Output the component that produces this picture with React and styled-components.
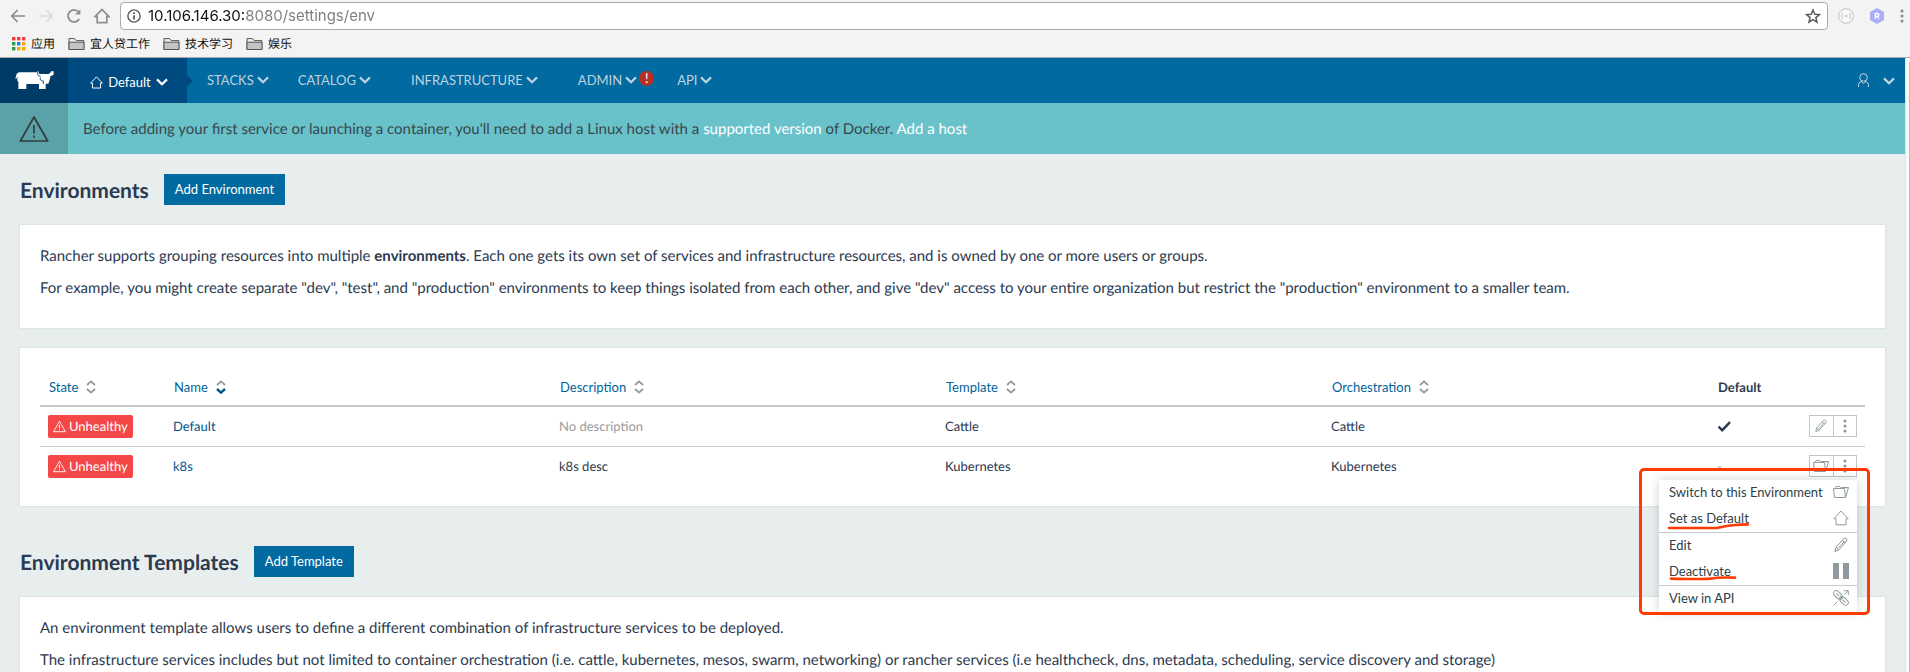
import React from "react";
import styled, { createGlobalStyle, css } from "styled-components";

const GlobalStyle = createGlobalStyle`
  *, *::before, *::after { box-sizing: border-box; }
  html, body, #root { height: 100%; }
  body {
    margin: 0;
    overflow: hidden;
    font-family: Lato, "Noto Sans CJK SC", sans-serif;
    font-size: 15px;
    line-height: 22px;
    color: #2b3a50;
    background: #e8eeee;
    text-rendering: geometricPrecision;
  }
  button { font: inherit; color: inherit; background: none; border: 0; padding: 0; margin: 0; cursor: pointer; }
  a { color: inherit; text-decoration: none; }
  svg { display: block; flex: none; }
`;

/* ---------- Icons ---------- */

const Line = ({ size = 16, w = 1, children, ...rest }) => (
  <svg width={size} height={size} viewBox="0 0 16 16" fill="none" stroke="currentColor" strokeWidth={w} aria-hidden="true" {...rest}>
    {children}
  </svg>
);

const Chevron = ({ width = 12 }) => (
  <svg width={width} height="8" viewBox="0 0 12 8" fill="none" stroke="currentColor" strokeWidth="2.2" aria-hidden="true">
    <path d="M1 1.4 6 6.2 11 1.4" />
  </svg>
);

const HomeIcon = ({ size, w }) => (
  <Line size={size} w={w}>
    <path d="M.8 8.8 8 1l7.2 7.800H13v6H3v-6H.8z" />
  </Line>
);

const FolderIcon = () => (
  <Line>
    <path d="M1.5 13.5.5 4.5h11l1 9zM2 4.500l1.200-2h3.600l1 1h6.200v1M12.500 13.500l3-10H13" />
  </Line>
);

const PencilIcon = ({ size }) => (
  <Line size={size}>
    <path d="M2 14.6 3 10.4 10.6 1.8Q12 .6 13.4 1.6 14.6 3 13.6 4.2L6 12.8zM3 10.4l3 2.4M9.3 3.4l3 2.4M5.600 11l6.200-7" />
  </Line>
);

const PauseIcon = () => (
  <Line stroke="none" fill="currentColor">
    <path d="M0 0h6v16H0zM10 0h6v16h-6z" />
  </Line>
);

const LinkIcon = () => (
  <Line w={1}>
    <path d="M.6 15.400l3.800-3.800M11.600 4.400l3.400-3.400M10.800.7h4.500v4.500" />
    <g transform="rotate(45 8 8)">
      <rect x="-1.200" y="5.300" width="9.600" height="5.400" rx="2.700" />
      <rect x="7.600" y="5.300" width="9.600" height="5.400" rx="2.700" />
      <path d="M1.600 8h3.800M10.600 8h3.800M6 7h4M6 9h4" />
    </g>
  </Line>
);

const DotsIcon = () => (
  <svg width="4" height="14" viewBox="0 0 4 14" fill="currentColor" aria-hidden="true">
    <circle cx="2" cy="2" r="1.6" />
    <circle cx="2" cy="7" r="1.6" />
    <circle cx="2" cy="12" r="1.6" />
  </svg>
);

const CheckIcon = () => (
  <svg width="14" height="22" viewBox="0 0 14 22" fill="none" stroke="currentColor" strokeWidth="2.4" aria-label="Yes">
    <path d="M1.500 11.6 5.300 15.200 13 7.200" />
  </svg>
);

const WarnIcon = ({ size, w }) => (
  <Line size={size} w={w}>
    <path d="M8 1.600 15.300 14.400H.7zM8 5.800v4.600M8 11.400v1.300" strokeLinejoin="round" />
  </Line>
);

const SortIcon = ({ active }) => (
  <svg width="10" height="14" viewBox="0 0 10 14" fill="none" stroke="#8f9a9f" strokeWidth="1.8" aria-hidden="true">
    <path d="M1 5 5 1.4 9 5" />
    <path d="M1 9 5 12.6 9 9" stroke={active ? "#00558b" : "#8f9a9f"} strokeWidth={active ? 2.4 : 1.8} />
  </svg>
);

const UserIcon = () => (
  <svg width="11" height="15" viewBox="0 0 11 15" fill="none" stroke="currentColor" aria-hidden="true">
    <circle cx="5.5" cy="4.5" r="3.8" />
    <path d="M.6 14v-2.6q.2-2 2.6-2.9M10.4 14v-2.6q-.2-2-2.6-2.9M3 8l2.5 2.6L8 8" />
  </svg>
);

const CowLogo = () => (
  <svg width="39" height="19" viewBox="0 0 117 57" fill="#fff" aria-hidden="true">
    <path d="M9 5Q10 4 14 4H68V1H71V6Q72 9 75 9H100Q107 9 108 1H116V10Q115 15 105 16L106 20 102 33 100 38H92V54H72V39H34V54H10V32L7 29V16L4 23H1L4 11Q6 7 9 5Z" />
    <path d="M68 4v7q1 5 9 5M76 20q-2 10 9 10v9" fill="none" stroke="#003b68" strokeWidth="2.6" />
  </svg>
);

/* ---------- Browser chrome ---------- */

const Screen = styled.div`
  display: flex;
  flex-direction: column;
  height: 100vh;
  overflow: hidden;
`;

const Chrome = styled.div`
  flex: none;
  background: #f3f3f3;
  border-bottom: 1px solid #a9a9a9;
  font-family: Inter, "Noto Sans CJK SC", sans-serif;
`;

const Toolbar = styled.div`
  display: flex;
  align-items: center;
  height: 30px;
  padding: 2px 6px 0 10px;
`;

const ToolGroup = styled.div`
  display: flex;
  align-items: center;
  gap: 12px;
  margin-right: 10px;
`;

const ToolButton = styled.button`
  display: grid;
  place-items: center;
  color: ${(p) => (p.disabled ? "#d9d9d9" : "#8d8d8d")};
`;

const Omnibox = styled.label`
  flex: 1;
  display: flex;
  align-items: center;
  gap: 7px;
  height: 28px;
  padding: 0 6px;
  color: #5a5a5a;
  background: #fff;
  border: 1px solid #ababab;
  border-radius: 4px;
`;

const UrlInput = styled.input`
  flex: 1;
  min-width: 0;
  padding: 0;
  border: 0;
  outline: 0;
  font: 15px/20px Inter, sans-serif;
  color: transparent;
  background: linear-gradient(to right, #111 97px, #7b7b7b 97px);
  background-clip: text;
`;

const Extensions = styled.div`
  display: flex;
  align-items: center;
  gap: 16px;
  margin-left: 10px;
  color: #777;
`;

const Bookmarks = styled.nav`
  display: flex;
  align-items: center;
  gap: 13px;
  height: 27px;
  padding: 0 12px;
`;

const Bookmark = styled.a`
  display: flex;
  align-items: center;
  gap: 5px;
  font-size: 12px;
  line-height: 18px;
  color: #111;
`;

const AppsIcon = () => (
  <svg width="14" height="14" viewBox="0 0 14 14" aria-hidden="true">
    {["#f23b3b", "#f23b3b", "#f23b3b", "#2c9a4b", "#1a80f0", "#f5a800", "#2c9a4b", "#f5a800", "#f5a800"].map((c, i) => (
      <rect key={i} x={(i % 3) * 5} y={Math.floor(i / 3) * 5} width="3.4" height="3.4" fill={c} />
    ))}
  </svg>
);

const BookmarkFolder = () => (
  <svg width="17" height="14" viewBox="0 0 17 14" fill="#c4c4c4" stroke="#555" aria-hidden="true">
    <path d="M1 12.5V1.6h5.6l1.6 2h7.6v8.9z" fill="#eee" />
    <path d="M1 5.2h15v7.3H1z" />
  </svg>
);

/* ---------- Rancher page ---------- */

const Viewport = styled.div`
  flex: 1;
  display: flex;
  min-height: 0;
`;

const Page = styled.div`
  flex: 1;
  min-width: 0;
  overflow: hidden;
`;

const ScrollTrack = styled.div`
  flex: none;
  width: 5px;
  padding: 4px 0 0 3px;
  background: #fafafa;
  border-left: 1px solid #e6e6e6;
`;

const ScrollThumb = styled.div`
  height: 100%;
  background: #bcbcbc;
`;

const Header = styled.header`
  display: flex;
  height: 45px;
  color: #bfd3df;
  background: #006aa1;
  font-size: 13px;
`;

const Logo = styled.a`
  width: 68px;
  display: grid;
  place-items: center;
  background: #003b68;
`;

const EnvPicker = styled.button`
  position: relative;
  display: flex;
  align-items: center;
  justify-content: center;
  gap: 5px;
  width: 119px;
  padding: 3px 0 0 3px;
  color: #fff;
  background: #004a82;

  &::after {
    content: "";
    position: absolute;
    left: 100%;
    top: 17px;
    border: 6px solid transparent;
    border-right-width: 0;
    border-left-color: #004a82;
  }
`;

const MainNav = styled.nav`
  display: flex;
  gap: 40px;
  padding: 0 0 1px 20px;
`;

const NavButton = styled.button`
  position: relative;
  display: flex;
  align-items: center;
  gap: 3px;
  margin-right: ${(p) => (p.$tight ? "-11px" : "0")};
  color: inherit;
`;

const AlertBadge = styled.span`
  position: absolute;
  left: 100%;
  top: 13px;
  width: 15px;
  height: 15px;
  margin-left: 2px;
  border-radius: 8px;
  color: #fff;
  background: #b83024;
  line-height: 15px;
  text-align: center;
`;

const UserMenu = styled.button`
  display: flex;
  align-items: center;
  gap: 14px;
  margin-left: auto;
  padding-right: 10px;
  color: #c5d7e0;
`;

const Banner = styled.div`
  display: flex;
  align-items: stretch;
  height: 51px;
  color: #37474c;
  background: #69c2ca;
`;

const BannerIcon = styled.div`
  width: 68px;
  display: grid;
  place-items: center;
  color: #343b3d;
  background: #5ba2a8;
`;

const BannerText = styled.p`
  margin: 0;
  padding: 15px 15px 0;
  a { color: #fff; }
`;

const Content = styled.main`
  padding: 20px;
`;

const SectionHead = styled.div`
  display: flex;
  align-items: center;
  gap: 15px;
  margin-bottom: 20px;
  ${(p) => p.$spaced && css`margin-top: 40px;`}
`;

const Title = styled.h1`
  margin: 0;
  padding-top: 2px;
  font-size: 21px;
  line-height: 29px;
  font-weight: 700;
`;

const PrimaryButton = styled.button`
  height: 31px;
  padding: 0 11px;
  font-size: 13px;
  line-height: 31px;
  color: #fff;
  background: #006aa1;
`;

const Card = styled.section`
  padding: 20px 20px 19px;
  background: #fff;
  box-shadow: 0 0 2px rgba(90, 110, 120, 0.25);
  & + & { margin-top: 20px; }
  p { margin: 0 0 10px; }
`;

const Table = styled.table`
  width: 100%;
  table-layout: fixed;
  border-collapse: separate;
  border-spacing: 0;
  font-size: 13px;
`;

const Th = styled.th`
  width: ${(p) => p.$w || "auto"};
  height: 39px;
  padding: 0 9px;
  border-bottom: 2px solid #c3c8cc;
  text-align: left;
  font-weight: 700;
`;

const SortButton = styled.button`
  display: flex;
  align-items: center;
  gap: 8px;
  font-weight: 400;
  color: #00639a;
`;

const Row = styled.tr`
  td { border-bottom: 1px solid #c3c8cc; }
  &:last-child td { border-color: transparent; }
`;

const Td = styled.td`
  height: 40px;
  padding: 8px 8px 0;
  vertical-align: top;
  color: ${(p) => (p.$muted ? "#9a9a9a" : "inherit")};
  a { color: #00558b; }
`;

const StateBadge = styled.span`
  display: flex;
  align-items: center;
  gap: 3px;
  width: max-content;
  height: 23px;
  padding: 0 5px 1px;
  border-radius: 2px;
  color: #fff;
  background: #f44747;
`;

const Actions = styled.div`
  position: relative;
  display: flex;
  width: 48px;
  height: 22px;
  margin-left: auto;
  border: 1px solid #bfc6c8;
  color: #8e9a9d;
`;

const ActionButton = styled.button`
  flex: 1;
  display: grid;
  place-items: center;
  & + & { border-left: 1px solid #bfc6c8; }
`;

const Menu = styled.div`
  position: absolute;
  z-index: 2;
  top: 24px;
  right: -1px;
  width: 198px;
  background: #fff;
  box-shadow: 0 0 10px rgba(60, 80, 90, 0.25);
`;

const MenuItem = styled.button`
  display: flex;
  align-items: center;
  justify-content: space-between;
  width: 100%;
  height: ${(p) => (p.$divided ? "27px" : "26px")};
  padding: 0 8px 2px 10px;
  border-top: ${(p) => (p.$divided ? "1px solid #c3c8cc" : "0")};
  color: #2f4047;
  white-space: nowrap;
  svg { color: #8e9a9d; }
`;

const Highlight = styled.div`
  position: absolute;
  inset: -12px -13px -3px -20px;
  border: 3px solid #ff3b05;
  border-radius: 5px;
  pointer-events: none;
`;

const Underlines = styled.svg`
  position: absolute;
  top: 0;
  left: 0;
  pointer-events: none;
`;

const navItems = [
  { label: "STACKS", tight: true },
  { label: "CATALOG" },
  { label: "INFRASTRUCTURE" },
  { label: "ADMIN", alert: true },
  { label: "API" },
];

const sortable = ["State", "Name", "Description", "Template", "Orchestration"];

const environments = [
  { name: "Default", template: "Cattle", isDefault: true },
  { name: "k8s", description: "k8s desc", template: "Kubernetes", open: true },
];

const menuItems = [
  { label: "Switch to this Environment", icon: <FolderIcon /> },
  { label: "Set as Default", icon: <HomeIcon /> },
  { label: "Edit", icon: <PencilIcon />, divided: true },
  { label: "Deactivate", icon: <PauseIcon /> },
  { label: "View in API", icon: <LinkIcon />, divided: true },
];

function ActionMenu() {
  return (
    <Menu>
      {menuItems.map((m) => (
        <MenuItem key={m.label} $divided={m.divided}>
          {m.label}
          {m.icon}
        </MenuItem>
      ))}
      <Underlines width="198" height="132" viewBox="0 0 198 132" fill="none" stroke="#ff3b05" strokeWidth="2.6" strokeLinecap="round" strokeLinejoin="round" aria-hidden="true">
        <path d="M10 48H58Q68 45.500 76 45 82 44.500 89 44.400" />
        <path d="M12 98.600Q40 99.500 51 98.600 60 97 76 97.600" />
      </Underlines>
      <Highlight />
    </Menu>
  );
}

function BrowserChrome() {
  return (
    <Chrome>
      <Toolbar>
        <ToolGroup>
          <ToolButton aria-label="Back">
            <Line w={1.7}><path d="M15 8H2M7.600 2 1.800 8l5.800 6" /></Line>
          </ToolButton>
          <ToolButton aria-label="Forward" disabled>
            <Line w={1.7}><path d="M1 8h13M8.400 2l5.800 6-5.800 6" /></Line>
          </ToolButton>
          <ToolButton aria-label="Reload">
            <Line w={1.8}><path d="M13.200 11A6 6 0 1 1 12.600 4" /><path d="M14.400 1.200v5.400H9z" fill="currentColor" stroke="none" /></Line>
          </ToolButton>
          <ToolButton aria-label="Home">
            <Line w={1.7}><path d="M1 8.600 8 1.400l7 7.200h-2.200v6H3.200v-6z" /></Line>
          </ToolButton>
        </ToolGroup>
        <Omnibox>
          <Line size={14} w={1.6}>
            <circle cx="8" cy="8" r="7" />
            <path d="M8 7v5M8 3.800v1.800" strokeWidth="2" />
          </Line>
          <UrlInput aria-label="Address" defaultValue="10.106.146.30:8080/settings/env" />
          <Line size={16} w={1.5}>
            <path d="M8 2l1.800 4.200 4.700.400-3.600 3 1.100 4.500L8 11.700l-4 2.400 1.100-4.500-3.600-3 4.700-.4z" />
          </Line>
        </Omnibox>
        <Extensions>
          <svg width="16" height="16" viewBox="0 0 16 16" fill="none" stroke="#bdbdbd" aria-hidden="true">
            <circle cx="8" cy="8" r="7.300" fill="#f8f8f8" />
            <path d="M5 5.200q-1.200 0-1 1.300.2 1.500-1 1.500 1.200 0 1 1.500-.2 1.300 1 1.300M11 5.200q1.200 0 1 1.300-.2 1.500 1 1.500-1.200 0-1 1.500.2 1.300-1 1.300M6 8h4" />
          </svg>
          <svg width="14" height="16" viewBox="0 0 14 16" aria-hidden="true">
            <path d="M7 0l7 4v8l-7 4-7-4V4z" fill="#a9aef5" />
            <path d="M5.400 11V5.500h2q1.500 0 1.500 1.400T7.400 8.300h-2M7.200 8.300 9 11" fill="none" stroke="#fff" strokeWidth="1.300" />
          </svg>
          <ToolButton aria-label="Browser menu"><DotsIcon /></ToolButton>
        </Extensions>
      </Toolbar>
      <Bookmarks>
        <Bookmark href="#apps"><AppsIcon />应用</Bookmark>
        {["宜人贷工作", "技术学习", "娱乐"].map((b) => (
          <Bookmark key={b} href="#folder"><BookmarkFolder />{b}</Bookmark>
        ))}
      </Bookmarks>
    </Chrome>
  );
}

export default function App() {
  return (
    <Screen>
      <GlobalStyle />
      <BrowserChrome />
      <Viewport>
        <Page>
          <Header>
            <Logo href="#home" aria-label="Rancher"><CowLogo /></Logo>
            <EnvPicker><HomeIcon size={13} w={1.2} />Default<Chevron /></EnvPicker>
            <MainNav>
              {navItems.map((n) => (
                <NavButton key={n.label} $tight={n.tight}>
                  {n.label}
                  <Chevron />
                  {n.alert && <AlertBadge>!</AlertBadge>}
                </NavButton>
              ))}
            </MainNav>
            <UserMenu aria-label="User menu"><UserIcon /><Chevron /></UserMenu>
          </Header>
          <Banner>
            <BannerIcon><WarnIcon size={30} w={0.9} /></BannerIcon>
            <BannerText>
              Before adding your first service or launching a container, you'll need to add a Linux host with a{" "}
              <a href="#docker">supported version</a> of Docker. <a href="#host">Add a host</a>
            </BannerText>
          </Banner>
          <Content>
            <SectionHead>
              <Title>Environments</Title>
              <PrimaryButton>Add Environment</PrimaryButton>
            </SectionHead>
            <Card>
              <p>
                Rancher supports grouping resources into multiple <b>environments</b>. Each one gets its own set of
                services and infrastructure resources, and is owned by one or more users or groups.
              </p>
              <p>
                For example, you might create separate "dev", "test", and "production" environments to keep things
                isolated from each other, and give "dev" access to your entire organization but restrict the
                "production" environment to a smaller team.
              </p>
            </Card>
            <Card>
              <Table>
                <thead>
                  <tr>
                    {sortable.map((s) => (
                      <Th key={s} $w={s === "State" ? "125px" : undefined}>
                        <SortButton>{s}<SortIcon active={s === "Name"} /></SortButton>
                      </Th>
                    ))}
                    <Th $w="80px">Default</Th>
                    <Th $w="76px" aria-label="Actions" />
                  </tr>
                </thead>
                <tbody>
                  {environments.map((e) => (
                    <Row key={e.name}>
                      <Td><StateBadge><WarnIcon size={13} w={1.1} />Unhealthy</StateBadge></Td>
                      <Td><a href="#env">{e.name}</a></Td>
                      <Td $muted={!e.description}>{e.description || "No description"}</Td>
                      <Td>{e.template}</Td>
                      <Td>{e.template}</Td>
                      <Td $muted={!e.isDefault}>{e.isDefault ? <CheckIcon /> : "-"}</Td>
                      <Td>
                        <Actions>
                          <ActionButton aria-label={e.open ? "Switch" : "Edit"}>
                            {e.open ? <FolderIcon /> : <PencilIcon size={14} />}
                          </ActionButton>
                          <ActionButton aria-label="More actions"><DotsIcon /></ActionButton>
                          {e.open && <ActionMenu />}
                        </Actions>
                      </Td>
                    </Row>
                  ))}
                </tbody>
              </Table>
            </Card>
            <SectionHead $spaced>
              <Title as="h2">Environment Templates</Title>
              <PrimaryButton>Add Template</PrimaryButton>
            </SectionHead>
            <Card>
              <p>
                An environment template allows users to define a different combination of infrastructure services to
                be deployed.
              </p>
              <p>
                The infrastructure services includes but not limited to container orchestration (i.e. cattle,
                kubernetes, mesos, swarm, networking) or rancher services (i.e healthcheck, dns, metadata, scheduling,
                service discovery and storage)
              </p>
            </Card>
          </Content>
        </Page>
        <ScrollTrack><ScrollThumb /></ScrollTrack>
      </Viewport>
    </Screen>
  );
}
